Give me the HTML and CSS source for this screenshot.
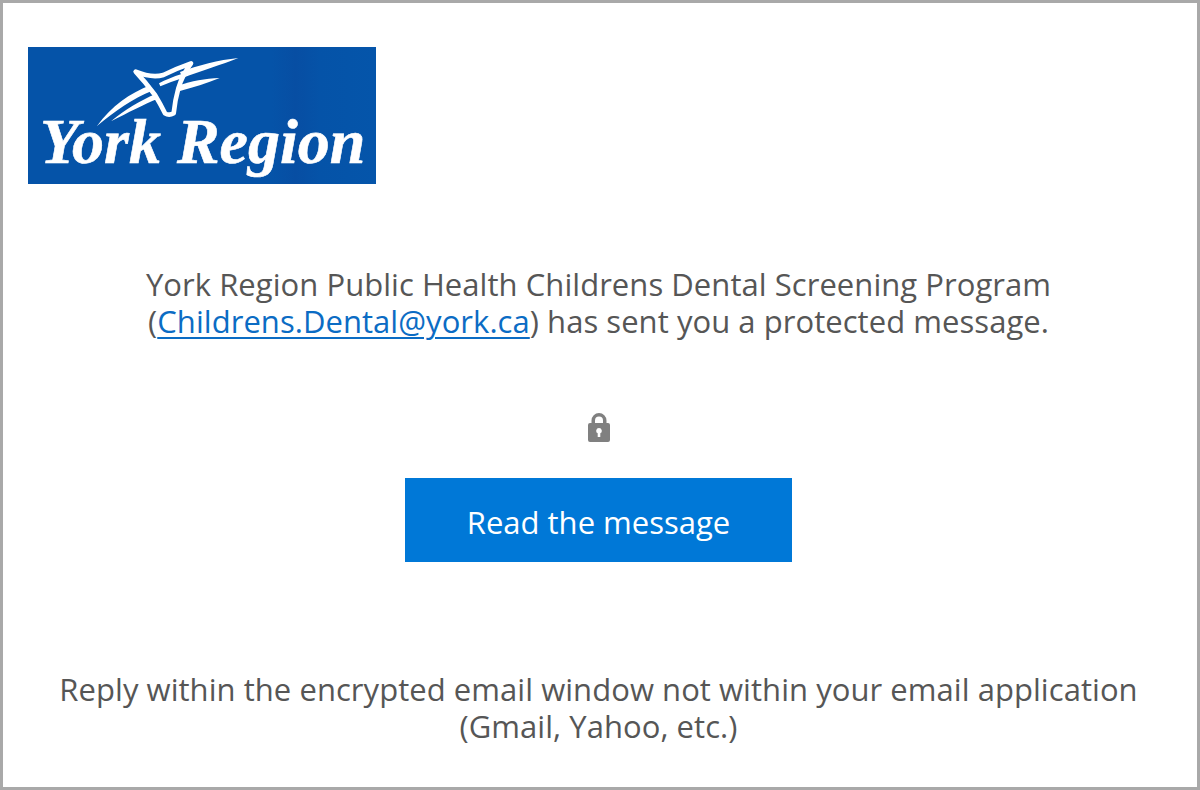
FILE: index.html
```html
<!DOCTYPE html>
<html lang="en">
<head>
<meta charset="utf-8">
<title>Protected message</title>
<link rel="stylesheet" href="styles.css">
</head>
<body>
<main class="frame">
  <div class="logo">
    <svg class="logo-star" viewBox="-201 -9 1044 411" aria-hidden="true">
      <path class="star-line" d="M122 65Q170 85 205 75Q245 55 288 40Q262 75 250 115Q240 150 236 190Q222 198 210 190Q198 165 180 135Q150 95 122 65Z"/>
      <path class="star-fill" d="M6 228C50 168 105 130 165 106L172 122C115 145 60 182 6 228Z"/>
      <path class="star-fill" d="M48 214C90 178 135 152 182 132L188 146C145 164 100 187 48 214Z"/>
      <path class="star-fill" d="M192 100C210 90 235 80 260 72L264 84C240 92 215 100 196 109Z"/>
      <path class="star-fill" d="M255 66C310 46 370 30 430 24C380 44 320 62 262 84Z"/>
      <path class="star-fill" d="M250 106C290 94 330 85 374 84C335 100 295 112 252 124Z"/>
    </svg>
    <span class="logo-text">York Region</span>
  </div>
  <p class="lead">York Region Public Health Childrens Dental Screening Program<br>(<a class="mail" href="#">Childrens.Dental@york.ca</a>) has sent you a protected message.</p>
  <svg class="lock" viewBox="0 0 22 29" aria-hidden="true">
    <path class="lock-body" fill-rule="evenodd" d="M3.500 10V7.500a7.500 7.500 0 0 1 15 0V10H20a2 2 0 0 1 2 2v15a2 2 0 0 1-2 2H2a2 2 0 0 1-2-2V12a2 2 0 0 1 2-2ZM7 10h8V7.500a4 4 0 0 0-8 0ZM11 15a2.800 2.800 0 0 0-1.300 5.300V24h2.600v-3.700A2.800 2.800 0 0 0 11 15Z"/>
  </svg>
  <a class="button" href="#">Read the message</a>
  <p class="note">Reply within the encrypted email window not within your email application<br>(Gmail, Yahoo, etc.)</p>
</main>
</body>
</html>
```
FILE: styles.css
```css
* { box-sizing: border-box; }
html, body { margin: 0; padding: 0; background: #fff; }
.frame {
  width: 1200px;
  height: 790px;
  border: 3px solid #a9a9a9;
  padding: 44px 28px 0 25px;
  display: flex;
  flex-direction: column;
  align-items: center;
  font-family: "Open Sans", "Noto Sans", sans-serif;
  color: #565656;
  overflow: hidden;
}
.logo {
  position: relative;
  align-self: flex-start;
  width: 348px;
  height: 137px;
  padding: 61px 0 0 12px;
  background: linear-gradient(90deg, #0553a8 0, #0553a8 70%, #074ea3 77%, #0553a8 84%, #0555aa 100%);
  overflow: hidden;
}
.logo-star { position: absolute; inset: 0; width: 100%; height: 100%; filter: blur(.7px); }
.star-fill { fill: #fff; }
.star-line { fill: none; stroke: #fff; stroke-width: 14; stroke-linejoin: round; }
.logo-text {
  display: block;
  font: italic bold 64px/68px "Liberation Serif", serif;
  white-space: nowrap;
  color: #fff;
  -webkit-text-stroke: .6px #fff;
  filter: blur(.6px);
}
.lead, .note {
  margin: 0;
  width: 100%;
  text-align: center;
  font-size: 31px;
  line-height: 37px;
  letter-spacing: .05px;
}
.lead { margin-top: 82px; }
.mail { color: #0b6cc4; text-decoration: underline; text-underline-offset: 4px; text-decoration-thickness: 1.500px; }
.lock { display: block; width: 22px; height: 29px; margin-top: 73px; filter: blur(.4px); }
.lock-body { fill: #808080; }
.button {
  display: flex;
  align-items: center;
  justify-content: center;
  width: 387px;
  height: 84px;
  margin-top: 36px;
  padding-top: 3px;
  background: #0078d7;
  color: #fff;
  font-size: 31px;
  text-decoration: none;
}
.note { margin-top: 109px; }
```
